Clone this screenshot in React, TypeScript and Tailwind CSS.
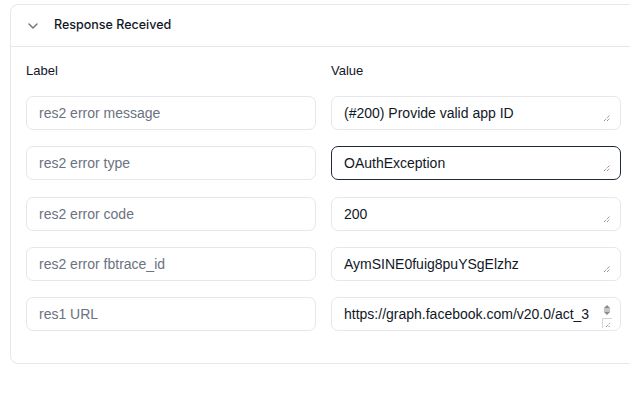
import React from "react";

const rows = [
  { label: "res2 error message", value: "(#200) Provide valid app ID" },
  { label: "res2 error type", value: "OAuthException", focused: true },
  { label: "res2 error code", value: "200" },
  { label: "res2 error fbtrace_id", value: "AymSINE0fuig8puYSgElzhz" },
  { label: "res1 URL", value: "https://graph.facebook.com/v20.0/act_3", scroll: true },
];

function Handle() {
  return (
    <svg width="8" height="8" viewBox="0 0 8 8" className="absolute right-[10px] bottom-[8px] pointer-events-none">
      <path d="M1 7 L7 1 M4 7 L7 4" stroke="#6b6b6b" strokeWidth="1" strokeDasharray="1 1" />
    </svg>
  );
}

function ScrollBits() {
  return (
    <svg width="14" height="28" viewBox="0 0 14 28" className="absolute right-[7px] top-[4px] pointer-events-none">
      <path d="M3.5 7.5 L7 4 L10.5 7.5 Z" fill="#8a8a8a" />
      <rect x="4" y="8.5" width="6" height="1" fill="#8a8a8a" />
      <path d="M3.5 10.5 L7 14 L10.5 10.5 Z" fill="#8a8a8a" />
      <path d="M2.5 27 L2.5 17.5 L12 17.5" stroke="#d4d4d4" strokeWidth="1" fill="none" />
      <path d="M6 26 L10 22 M8.5 26 L10 24.5" stroke="#6b6b6b" strokeWidth="1" strokeDasharray="1 1" />
    </svg>
  );
}

export default function App() {
  return (
    <div
      className="w-[630px] h-[397px] overflow-hidden bg-white text-[#111827]"
      style={{ fontFamily: '"Liberation Sans", Arial, sans-serif' }}
    >
      <div className="ml-[10px] mt-[4px] w-[630px] rounded-[8px] border border-[#e5e7eb]">
        <div className="flex h-[42px] items-center border-b border-[#e5e7eb] pl-[17px]">
          <svg width="10" height="6" viewBox="0 0 10 6" className="mt-[1px]">
            <path d="M1 1 L5 5 L9 1" stroke="#6b7280" strokeWidth="1.4" fill="none" strokeLinecap="round" strokeLinejoin="round" />
          </svg>
          <span className="ml-[16px] font-['Inter'] text-[12.5px] font-medium text-[#111827]">Response Received</span>
        </div>
        <div className="px-[15px] pt-[14px] pb-[32px]">
          <div className="grid w-[595px] grid-cols-2 gap-x-[15px]">
            <div className="text-[13px] leading-5">Label</div>
            <div className="text-[13px] leading-5">Value</div>
          </div>
          <div className="mt-[15px] grid w-[595px] grid-cols-2 gap-x-[15px] gap-y-[16.25px]">
            {rows.map((r) => (
              <React.Fragment key={r.label}>
                <input
                  placeholder={r.label}
                  className="h-[34px] w-full rounded-[7px] border border-[#e5e7eb] bg-white px-3 text-[14px] leading-5 text-[#111827] placeholder:text-[#6b7280] outline-none"
                />
                <div className="relative h-[34px]">
                  <textarea
                    rows={1}
                    defaultValue={r.value}
                    wrap="off"
                    className={
                      "block h-[34px] w-full resize-none overflow-hidden rounded-[7px] border bg-white py-[6px] pl-3 pr-[24px] text-[14px] leading-5 text-[#111827] outline-none " +
                      (r.focused ? "border-[#1f2937]" : "border-[#e5e7eb]")
                    }
                  />
                  {r.scroll ? <ScrollBits /> : <Handle />}
                </div>
              </React.Fragment>
            ))}
          </div>
        </div>
      </div>
    </div>
  );
}
